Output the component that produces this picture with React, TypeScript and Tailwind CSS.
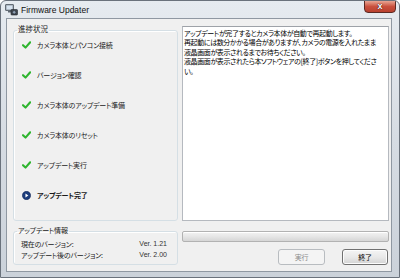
import React from "react";

const jp = {
  fontFamily: '"Noto Sans CJK JP", "Noto Sans", sans-serif',
};

function Check() {
  return (
    <svg width="9" height="8" viewBox="0 0 9 8" className="shrink-0">
      <path d="M1 4.2 L3.5 6.6 L8.2 1.3" fill="none" stroke="#2fb52f" strokeWidth="2.1" strokeLinecap="round" strokeLinejoin="round" />
    </svg>
  );
}

function Current() {
  return (
    <svg width="9" height="9" viewBox="0 0 10 10" className="shrink-0">
      <circle cx="5" cy="5" r="4.6" fill="#1d3d7c" />
      <circle cx="5" cy="5" r="4.6" fill="none" stroke="#0f2451" strokeWidth="0.6" />
      <path d="M3.8 2.8 L7.1 5 L3.8 7.2 Z" fill="#ffffff" />
    </svg>
  );
}

function AppIcon() {
  return (
    <svg width="13" height="13" viewBox="0 0 13 13" className="shrink-0">
      <rect x="0.5" y="1.5" width="8" height="6" rx="0.5" fill="#9aa3ad" stroke="#4c5560" strokeWidth="0.8" />
      <rect x="1.6" y="2.6" width="5.8" height="3.8" fill="#d7e3ef" />
      <rect x="3" y="8" width="3" height="1.5" fill="#5d6670" />
      <rect x="6" y="6.5" width="6.5" height="5.5" rx="0.8" fill="#3f4650" stroke="#22272d" strokeWidth="0.6" />
      <circle cx="9.2" cy="9.3" r="1.7" fill="#8fa1b5" stroke="#1b1f24" strokeWidth="0.5" />
    </svg>
  );
}

const steps = [
  "カメラ本体とパソコン接続",
  "バージョン確認",
  "カメラ本体のアップデート準備",
  "カメラ本体のリセット",
  "アップデート実行",
];

const lines = [
  "アップデートが完了するとカメラ本体が自動で再起動します。",
  "再起動には数分かかる場合がありますが、カメラの電源を入れたまま",
  "液晶画面が表示されるまでお待ちください。",
  "液晶画面が表示されたら本ソフトウェアの[終了]ボタンを押してくださ",
  "い。",
];

export default function App() {
  return (
    <div className="w-[400px] h-[278px] flex flex-col border border-[#6a727c] rounded-t-[6px] overflow-hidden bg-gradient-to-b from-[#e6ebf0] via-[#d6dce3] to-[#cbd2da]">
      {/* title bar */}
      <div className="h-[17px] flex items-start shrink-0">
        <div className="pt-[2px] pl-[4px]">
          <AppIcon />
        </div>
        <div
          className="ml-[3px] mt-[3px] text-[8.5px] leading-[12px] text-[#111]"
          style={{ fontFamily: '"Liberation Sans", Arial, sans-serif' }}
        >
          Firmware Updater
        </div>
        <div className="flex-1" />
        <div className="mr-[3px] -mt-[1px] w-[32px] h-[13px] rounded-b-[4px] border border-[#5a2a24] bg-gradient-to-b from-[#e8a594] via-[#c9503e] to-[#b8412f] flex items-center justify-center">
          <span
            className="text-[9px] leading-[9px] font-bold text-white [text-shadow:0_0_1px_#3a0d08,0_0_1px_#3a0d08]"
            style={{ fontFamily: '"Liberation Sans", Arial, sans-serif' }}
          >
            x
          </span>
        </div>
      </div>

      {/* client area */}
      <div
        className="flex-1 ml-[5px] mr-[7px] mb-[5px] border border-[#8f98a2] bg-[#f0f0f0] flex flex-col [font-feature-settings:'palt'] text-[7px] tracking-[-0.2px] text-[#1a1a1a]"
        style={jp}
      >
        {/* top row */}
        <div className="flex pt-[5px] pl-[6px] pr-[2px] h-[202px] shrink-0">
          <fieldset className="w-[165px] h-[197px] border border-[#d5dfe5] rounded-[3px] shadow-[inset_1px_1px_0_#ffffff]">
            <legend className="ml-[3px] px-[1px] leading-[10px] pb-[3px] text-[7.5px] tracking-normal">進捗状況</legend>
            <div className="-mt-[7px] flex flex-col">
              {steps.map((s) => (
                <div key={s} className="h-[30px] flex items-center pl-[8px] gap-[6px]">
                  <Check />
                  <span className="leading-[10px]">{s}</span>
                </div>
              ))}
              <div className="h-[30px] flex items-center pl-[8px] gap-[6px]">
                <Current />
                <span className="leading-[10px] font-bold">アップデート完了</span>
              </div>
            </div>
          </fieldset>
          <div className="ml-[4px] mt-[2px] flex-1 h-[195px] bg-white border border-[#b5b9bf] border-t-[#9ea2a8] pl-[1px] pt-[2px] text-black">
            {lines.map((l, i) => (
              <div key={i} className="whitespace-nowrap leading-[9.4px] text-[7px] tracking-[-0.4px]">
                {l}
              </div>
            ))}
          </div>
        </div>

        {/* bottom row */}
        <div className="flex pl-[6px] pr-[2px]">
          <fieldset className="mt-[4px] w-[165px] border border-[#d5dfe5] rounded-[3px] shadow-[inset_1px_1px_0_#ffffff] pl-[7px] pr-[10px] pb-[2px]">
            <legend className="-ml-[4px] px-[1px] leading-[10px] pb-[3px]">アップデート情報</legend>
            <div className="flex justify-between h-[11px] items-center leading-[10px]">
              <span>現在のバージョン:</span>
              <span className="text-[#333] tracking-normal" style={{ fontFamily: '"Liberation Sans", Arial, sans-serif' }}>Ver. 1.21</span>
            </div>
            <div className="flex justify-between h-[11px] items-center leading-[10px]">
              <span>アップデート後のバージョン:</span>
              <span className="text-[#333] tracking-normal" style={{ fontFamily: '"Liberation Sans", Arial, sans-serif' }}>Ver. 2.00</span>
            </div>
          </fieldset>
          <div className="ml-[4px] flex-1 flex flex-col">
            <div className="mt-[10px] h-[11px] rounded-[2px] border border-[#b2b2b2] bg-gradient-to-b from-[#f3f3f3] via-[#e6e6e6] to-[#d6d6d6] shadow-[inset_0_1px_0_#ffffff]" />
            <div className="mt-[7px] flex justify-end gap-[17px] pr-[1px]">
              <div className="w-[47px] h-[16px] rounded-[3px] border border-[#b8bcc0] bg-[#f4f4f4] flex items-center justify-center text-[#8a8a8a] leading-[10px]">
                実行
              </div>
              <div className="w-[46px] h-[16px] rounded-[3px] border border-[#707070] bg-gradient-to-b from-[#f4f4f4] via-[#e9e9e9] to-[#d3d3d3] shadow-[inset_0_0_0_1px_#fcfcfc] flex items-center justify-center text-black leading-[10px]">
                終了
              </div>
            </div>
          </div>
        </div>
      </div>
    </div>
  );
}
